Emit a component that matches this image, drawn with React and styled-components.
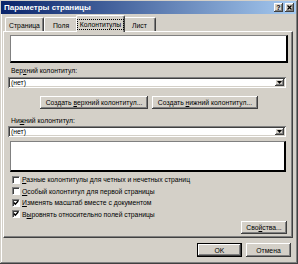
import React from 'react';
import styled, { createGlobalStyle, css } from 'styled-components';

const GlobalStyle = createGlobalStyle`
  html, body {
    margin: 0;
    padding: 0;
    background: #d4d0c8;
  }
  body {
    font-family: "Liberation Sans", Arial, sans-serif;
    font-size: 6.8px;
    color: #000;
  }
`;

const raised = css`
  box-shadow: inset -1px -1px #404040, inset 1px 1px #fff, inset -2px -2px #808080;
`;

const sunken = css`
  box-shadow: inset 1px 1px #808080, inset -1px -1px #fff, inset 2px 2px #404040, inset -2px -2px #d4d0c8;
`;

const Window = styled.div`
  width: 298px;
  height: 264px;
  box-sizing: border-box;
  padding: 1px 2px 2px 1px;
  background: #d4d0c8;
  box-shadow: inset -1px -1px #404040, inset 1px 1px #d4d0c8, inset -2px -2px #808080, inset 2px 2px #fff;
  display: flex;
  flex-direction: column;
`;

const TitleBar = styled.div`
  height: 13px;
  display: flex;
  align-items: center;
  padding: 0 2px 0 3px;
  background: linear-gradient(90deg, #0a246a 0%, #a6caf0 100%);
`;

const TitleText = styled.div`
  flex: 1;
  color: #fff;
  font-weight: bold;
  font-size: 8px;
  line-height: 13px;
  white-space: nowrap;
`;

const TitleButton = styled.div`
  width: 9px;
  height: 9px;
  box-sizing: border-box;
  background: #d4d0c8;
  ${raised};
  display: flex;
  align-items: center;
  justify-content: center;
  font-weight: bold;
  font-size: 7px;
  line-height: 9px;
  margin-left: ${p => (p.$gap ? 2 : 0)}px;
`;

const Body = styled.div`
  flex: 1;
  display: flex;
  flex-direction: column;
  padding: 1px 3px 0 2px;
`;

const TabStrip = styled.div`
  height: 16px;
  display: flex;
  align-items: flex-end;
  padding-left: 2px;
`;

const Tab = styled.div`
  width: ${p => p.$w}px;
  height: 14px;
  box-sizing: border-box;
  border-top: 1px solid #fff;
  border-left: 1px solid #fff;
  border-right: 1px solid #404040;
  border-radius: 2px 2px 0 0;
  box-shadow: inset -1px 0 #808080;
  background: #d4d0c8;
  display: flex;
  justify-content: center;
  align-items: flex-start;
  padding-top: 3px;
  line-height: 9px;
  white-space: nowrap;

  ${p => p.$active && css`
    height: 17px;
    margin: 0 -2px -1px;
    padding-top: 4px;
    position: relative;
    z-index: 1;
  `}
`;

const Focus = styled.span`
  display: inline-block;
  line-height: 9px;
  outline: 1px dotted #000;
  padding: 0 2px;
`;

const Panel = styled.div`
  height: 207px;
  box-sizing: border-box;
  border-top: 1px solid #fff;
  border-left: 1px solid #fff;
  border-right: 1px solid #404040;
  border-bottom: 1px solid #404040;
  box-shadow: inset -1px -1px #808080;
  display: flex;
  flex-direction: column;
`;

const Preview = styled.div`
  height: ${p => p.$h}px;
  box-sizing: border-box;
  margin: ${p => p.$top}px ${p => p.$right}px 0 6px;
  background: #fff;
  border-top: 1px solid #808080;
  border-left: 1px solid #808080;
  border-right: 2px solid #000;
  border-bottom: 2px solid #000;
`;

const FieldLabel = styled.div`
  margin: ${p => p.$top}px 0 0 7px;
  line-height: 9px;
  height: 9px;
  white-space: nowrap;
`;

const Combo = styled.div`
  height: 11px;
  box-sizing: border-box;
  margin: ${p => p.$top}px 6px 0 4px;
  background: #fff;
  ${sunken};
  padding: 2px;
  display: flex;
  align-items: center;
`;

const ComboText = styled.div`
  flex: 1;
  padding-left: 1px;
  line-height: 7px;
`;

const ArrowButton = styled.div`
  width: 9px;
  height: 7px;
  box-sizing: border-box;
  background: #d4d0c8;
  ${raised};
  display: flex;
  align-items: center;
  justify-content: center;
`;

const ButtonRow = styled.div`
  display: flex;
  gap: 4px;
  margin-top: 8px;
  padding-left: 36px;
`;

const Button = styled.div`
  width: ${p => p.$w}px;
  height: ${p => p.$h || 13}px;
  box-sizing: border-box;
  background: #d4d0c8;
  ${raised};
  display: flex;
  align-items: center;
  justify-content: center;
  white-space: nowrap;
  ${p => p.$default && css`
    border: 1px solid #000;
  `}
`;

const Checks = styled.div`
  margin-top: 2px;
  padding-left: 8px;
  display: flex;
  flex-direction: column;
`;

const CheckRow = styled.div`
  height: 11.5px;
  display: flex;
  align-items: center;
  white-space: nowrap;
`;

const CheckBox = styled.div`
  width: 8px;
  height: 8px;
  box-sizing: border-box;
  background: #fff;
  border-top: 1px solid #808080;
  border-left: 1px solid #808080;
  border-right: 1px solid #fff;
  border-bottom: 1px solid #fff;
  box-shadow: inset 1px 1px #404040;
  margin-right: 2px;
  display: flex;
  align-items: center;
  justify-content: center;
`;

const PropsButton = styled(Button)`
  align-self: flex-end;
  margin: 1px 5px 0 0;
`;

const Footer = styled.div`
  display: flex;
  justify-content: flex-end;
  gap: 4px;
  margin-top: 5px;
  padding-right: 2px;
`;

const DownArrow = () => (
  <svg width="5" height="3" viewBox="0 0 5 3">
    <polygon points="0,0 5,0 2.5,3" fill="#000" />
  </svg>
);

const CloseGlyph = () => (
  <svg width="5" height="5" viewBox="0 0 5 5">
    <path d="M0.5 0.5 L4.5 4.5 M4.5 0.5 L0.5 4.5" stroke="#000" strokeWidth="1.2" />
  </svg>
);

const Tick = () => (
  <svg width="6" height="6" viewBox="0 0 6 6">
    <polyline points="0.8,2.6 2.3,4.2 5.2,1" fill="none" stroke="#000" strokeWidth="1.4" />
  </svg>
);

const tabs = [
  { label: 'Страница', w: 39 },
  { label: 'Поля', w: 34 },
  { label: 'Колонтитулы', w: 49, active: true },
  { label: 'Лист', w: 33 },
];

const options = [
  { pre: '', key: 'Р', rest: 'азные колонтитулы для четных и нечетных страниц', checked: false },
  { pre: '', key: 'О', rest: 'собый колонтитул для первой страницы', checked: false },
  { pre: '', key: 'И', rest: 'зменять масштаб вместе с документом', checked: true },
  { pre: 'В', key: 'ы', rest: 'ровнять относительно полей страницы', checked: true },
];

const App = () => (
  <>
    <GlobalStyle />
    <Window>
      <TitleBar>
        <TitleText>Параметры страницы</TitleText>
        <TitleButton>?</TitleButton>
        <TitleButton $gap>
          <CloseGlyph />
        </TitleButton>
      </TitleBar>
      <Body>
        <TabStrip>
          {tabs.map(t => (
            <Tab key={t.label} $w={t.w} $active={t.active}>
              {t.active ? <Focus>{t.label}</Focus> : t.label}
            </Tab>
          ))}
        </TabStrip>
        <Panel>
          <Preview $h={28} $top={3} $right={4} />
          <FieldLabel $top={3}>
            Вер<u>х</u>ний колонтитул:
          </FieldLabel>
          <Combo $top={2}>
            <ComboText>(нет)</ComboText>
            <ArrowButton>
              <DownArrow />
            </ArrowButton>
          </Combo>
          <ButtonRow>
            <Button $w={108}>
              <span>Создать <u>в</u>ерхний колонтитул...</span>
            </Button>
            <Button $w={106}>
              <span>Создать <u>н</u>ижний колонтитул...</span>
            </Button>
          </ButtonRow>
          <FieldLabel $top={7}>
            Ни<u>ж</u>ний колонтитул:
          </FieldLabel>
          <Combo $top={1}>
            <ComboText>(нет)</ComboText>
            <ArrowButton>
              <DownArrow />
            </ArrowButton>
          </Combo>
          <Preview $h={31} $top={4} $right={6} />
          <Checks>
            {options.map(o => (
              <CheckRow key={o.rest}>
                <CheckBox>{o.checked && <Tick />}</CheckBox>
                <span>
                  {o.pre}
                  <u>{o.key}</u>
                  {o.rest}
                </span>
              </CheckRow>
            ))}
          </Checks>
          <PropsButton $w={46}>
            <span>Сво<u>й</u>ства...</span>
          </PropsButton>
        </Panel>
        <Footer>
          <Button $w={45} $h={14} $default>OK</Button>
          <Button $w={45} $h={14}>Отмена</Button>
        </Footer>
      </Body>
    </Window>
  </>
);

export default App;
